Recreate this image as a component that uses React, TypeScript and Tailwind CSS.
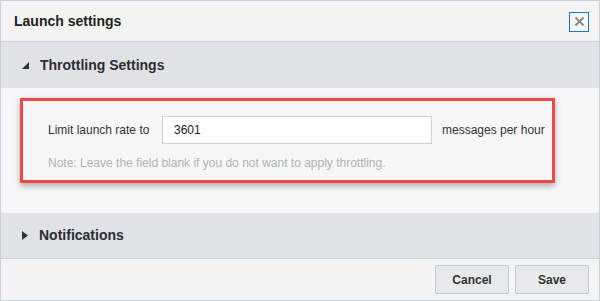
import { useState } from 'react';

export default function App() {
  const [rate, setRate] = useState('3601');

  return (
    <div
      className="w-[600px] h-[301px] bg-[#f7f7f7] border border-[#c9d1db] flex flex-col overflow-hidden"
      style={{ fontFamily: '"Liberation Sans", Arial, sans-serif' }}
    >
      {/* dialog header */}
      <div className="h-[41px] shrink-0 flex items-center justify-between pl-[13px] pr-[10px] bg-[#f4f4f4] border-b border-[#c9d1db]">
        <h1 className="text-[14px] font-bold text-[#222]">Launch settings</h1>
        <button className="w-[20px] h-[20px] mt-[1px] flex items-center justify-center border border-[#1d72d6] bg-[#f8f8f8] text-[#8a8a8a]">
          <svg width="11" height="11" viewBox="0 0 11 11">
            <path d="M1.5 1.5 L9.5 9.5 M9.5 1.5 L1.5 9.5" stroke="#8a8a8a" strokeWidth="2" />
          </svg>
        </button>
      </div>

      {/* throttling section */}
      <div className="h-[46px] shrink-0 flex items-center gap-[11px] pl-[21px] bg-[#e1e2e6]">
        <svg width="7" height="7" viewBox="0 0 7 7">
          <path d="M7 0 L7 7 L0 7 Z" fill="#333" />
        </svg>
        <span className="text-[14px] font-bold text-[#2c2c35]">Throttling Settings</span>
      </div>

      <div className="h-[125px] shrink-0 pt-[10px] pl-[19px] pr-[44px]">
        <div className="h-[85px] border-[3px] border-[#f04848] shadow-[0_3px_6px_rgba(0,0,0,0.3)] pl-[25px] pt-[15px]">
          <div className="flex items-center">
            <label className="text-[12px] text-[#333] w-[114px]">Limit launch rate to</label>
            <input
              value={rate}
              onChange={(e) => setRate(e.target.value)}
              className="w-[270px] h-[28px] px-[11px] bg-white border border-[#cfd3d8] text-[12px] text-[#222] outline-none"
            />
            <span className="ml-[10px] text-[12px] text-[#333]">messages per hour</span>
          </div>
          <p className="mt-[10px] text-[12px] text-[#b0b2b5]">
            Note: Leave the field blank if you do not want to apply throttling.
          </p>
        </div>
      </div>

      {/* notifications section */}
      <div className="h-[46px] shrink-0 flex items-center gap-[11px] pl-[21px] bg-[#e1e2e6] border-b border-[#c9d1db]">
        <svg width="6" height="9" viewBox="0 0 6 9">
          <path d="M0 0 L6 4.5 L0 9 Z" fill="#333" />
        </svg>
        <span className="text-[14px] font-bold text-[#2c2c35]">Notifications</span>
      </div>

      {/* footer */}
      <div className="flex-1 flex items-center justify-end gap-[6px] pr-[10px] bg-[#f4f4f4]">
        <button className="w-[74px] h-[29px] border border-[#c6c9ce] bg-[#e8e9eb] rounded-[2px] text-[12px] font-bold text-[#333]">
          Cancel
        </button>
        <button className="w-[74px] h-[29px] border border-[#c6c9ce] bg-[#e8e9eb] rounded-[2px] text-[12px] font-bold text-[#333]">
          Save
        </button>
      </div>
    </div>
  );
}
